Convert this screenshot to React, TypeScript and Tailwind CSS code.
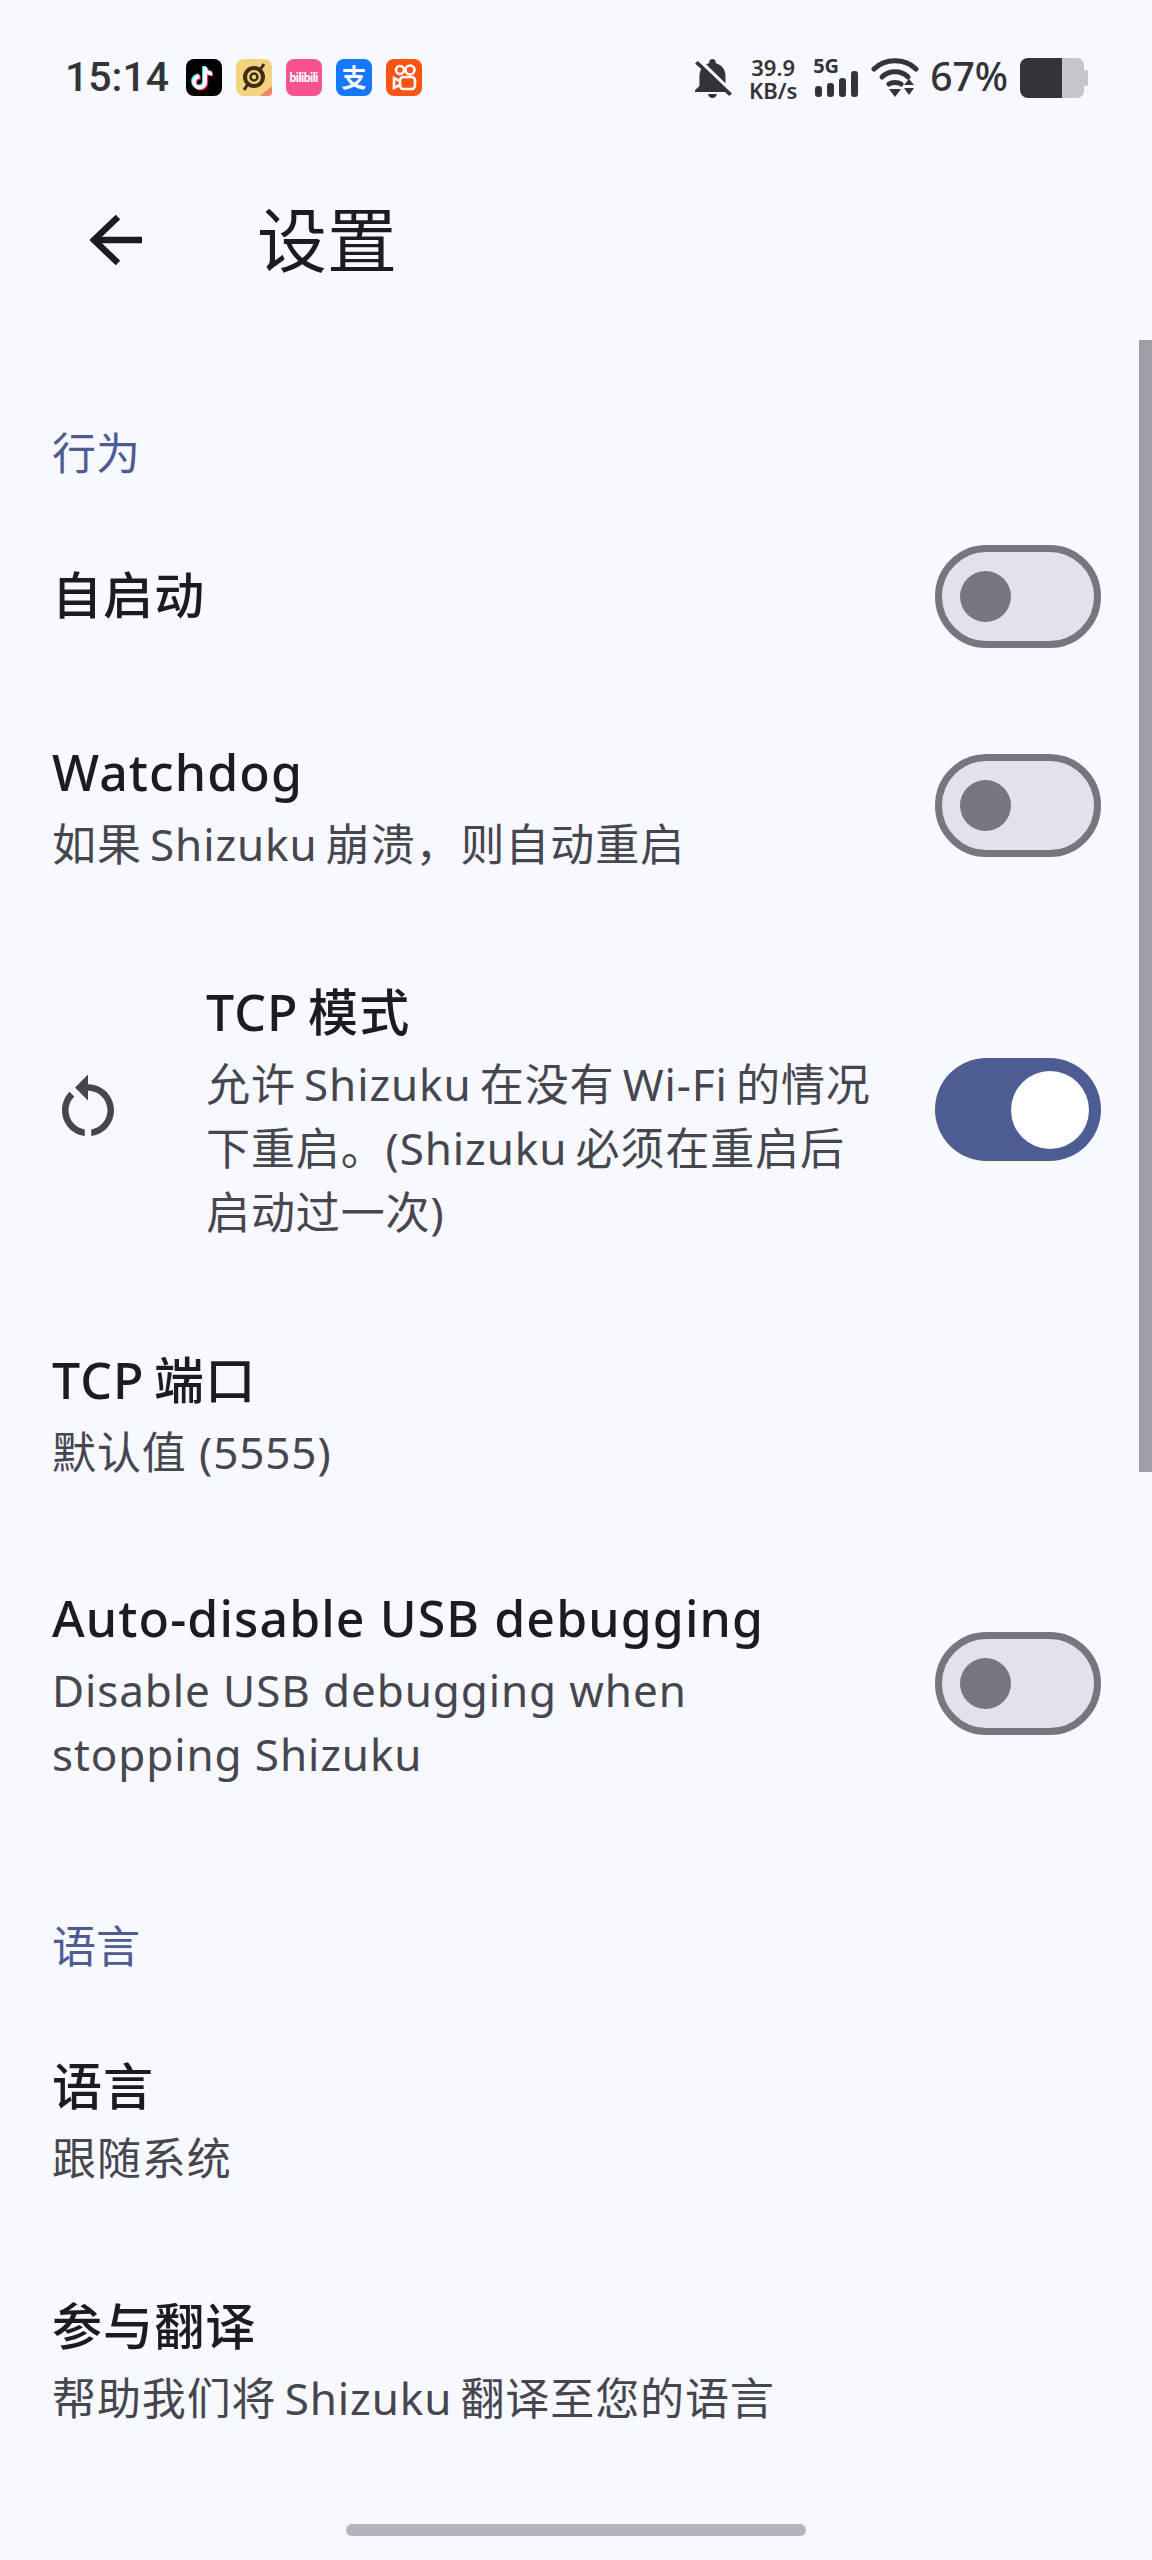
import type { ReactNode } from "react";

const font = "font-['Noto_Sans','Noto_Sans_CJK_SC',sans-serif]";

function Toggle({ on = false, className = "" }: { on?: boolean; className?: string }) {
    if (on) {
        return (
            <div className={`w-[166px] h-[103px] shrink-0 rounded-full bg-[#4d5c92] flex items-center justify-end pr-[12px] ${className}`}>
                <div className="w-[78px] h-[78px] rounded-full bg-white" />
            </div>
        );
    }
    return (
        <div className={`w-[166px] h-[103px] shrink-0 rounded-full bg-[#e2e2ec] border-[7px] border-[#767680] flex items-center pl-[18px] ${className}`}>
            <div className="w-[51px] h-[51px] rounded-full bg-[#767680]" />
        </div>
    );
}

function Row({
    title,
    lines = [],
    toggle,
    icon,
    className = "pt-[50px] pb-[51px]",
}: {
    title: string;
    lines?: string[];
    toggle?: "on" | "off";
    icon?: ReactNode;
    className?: string;
}) {
    return (
        <div className={`flex items-center pl-[52px] pr-[51px] ${className}`}>
            {icon}
            <div className="flex-1 min-w-0 pb-[3px]">
                <div className="text-[50px] leading-[64px] font-medium tracking-[1.1px] text-[#1b1b21] whitespace-nowrap">{title}</div>
                {lines.map((line, i) => (
                    <div
                        key={line}
                        className={`text-[44px] leading-[64px] tracking-[0.9px] text-[#46464f] whitespace-nowrap ${i === 0 ? "mt-[8px]" : ""}`}
                    >
                        {line}
                    </div>
                ))}
            </div>
            {toggle && <Toggle on={toggle === "on"} className={lines.length > 0 ? "mb-[8px]" : ""} />}
        </div>
    );
}

function Section({ label, className }: { label: string; className: string }) {
    return <div className={`pl-[52px] text-[44px] leading-[64px] text-[#4d5c92] ${className}`}>{label}</div>;
}

function AppIcons() {
    return (
        <div className="flex gap-[14px] ml-[18px]">
            <svg width="36" height="37" viewBox="0 0 36 37">
                <rect width="36" height="37" rx="8" fill="#000" />
                <g fill="none" strokeWidth="4">
                    <path d="M19 8v15a5.5 5.5 0 1 1-5.5-5.5M19 8c0 4 3 6.5 7 6.5" stroke="#25f4ee" transform="translate(-1 -1)" />
                    <path d="M19 8v15a5.5 5.5 0 1 1-5.5-5.5M19 8c0 4 3 6.5 7 6.5" stroke="#fe2c55" transform="translate(1.2 1)" />
                    <path d="M19 8v15a5.5 5.5 0 1 1-5.5-5.5M19 8c0 4 3 6.5 7 6.5" stroke="#fff" />
                </g>
            </svg>
            <svg width="36" height="37" viewBox="0 0 36 37">
                <rect width="36" height="37" rx="8" fill="#f5d27f" />
                <circle cx="18" cy="18" r="9" fill="none" stroke="#3d2f16" strokeWidth="4" />
                <circle cx="18" cy="18" r="3.5" fill="none" stroke="#3d2f16" strokeWidth="2.5" />
                <path d="M28 5 24 11M8 31l4-6" stroke="#3d2f16" strokeWidth="3" />
                <path d="M24 37l12-10v6a4 4 0 0 1-4 4z" fill="#f0856b" />
            </svg>
            <svg width="36" height="37" viewBox="0 0 36 37">
                <rect width="36" height="37" rx="8" fill="#f4538e" />
                <text x="18" y="23" textAnchor="middle" fontSize="12" fontWeight="700" fill="#fff" fontFamily="Roboto" textLength="29">
                    bilibili
                </text>
            </svg>
            <div className="w-[36px] h-[37px] rounded-[8px] bg-[#1677ff] flex items-center justify-center text-white text-[25px] leading-none font-bold">
                支
            </div>
            <svg width="36" height="37" viewBox="0 0 36 37">
                <rect width="36" height="37" rx="8" fill="#fb5412" />
                <g fill="none" stroke="#fff" strokeWidth="2.6">
                    <circle cx="14" cy="11" r="4" />
                    <circle cx="24" cy="11" r="4.5" />
                    <rect x="14" y="18" width="15" height="12" rx="3.5" />
                    <path d="M14 22 8 19v10l6-3" />
                </g>
            </svg>
        </div>
    );
}

function StatusBar() {
    return (
        <div className="h-[156px] pt-[58px] pl-[65px] pr-[64px] flex items-start justify-between text-[#333338]">
            <div className="flex items-center h-[38px]">
                <span className="w-[103px] text-[41px] leading-[38px] font-medium font-['Roboto',sans-serif]">15:14</span>
                <AppIcons />
            </div>
            <div className="flex items-start">
                <svg width="38" height="40" viewBox="3.5 2 17.5 20" fill="#333338" preserveAspectRatio="none">
                    <path d="M20 18.69L7.84 6.14 5.27 3.49 4 4.76l2.8 2.8v.01c-.52.99-.8 2.16-.8 3.42v5l-2 2v1h13.73l2 2L21 19.72l-1-1.03zM12 22c1.11 0 2-.89 2-2h-4c0 1.11.89 2 2 2zm6-7.32V11c0-3.08-1.64-5.64-4.5-6.32V4c0-.83-.67-1.5-1.5-1.5s-1.5.67-1.5 1.5v.68c-.15.03-.29.08-.42.12-.1.03-.2.07-.3.11h-.01c-.2.08-.4.17-.59.27-.01 0-.01 0-.02.01L18 14.68z" />
                </svg>
                <div className="ml-[18px] w-[46px] mt-[-2px] flex flex-col items-center font-semibold text-[22px] leading-[23px] whitespace-nowrap">
                    <span>39.9</span>
                    <span>KB/s</span>
                </div>
                <div className="relative ml-[16px] w-[46px] h-[40px]">
                    <span className="absolute left-[1px] top-[-3px] font-bold text-[20px] leading-[22px]">5G</span>
                    <svg width="46" height="40" viewBox="0 0 46 40" fill="#333338">
                        <rect x="3" y="28" width="7" height="11" rx="3" />
                        <rect x="15" y="25" width="7" height="14" rx="3" />
                        <rect x="27" y="20" width="7" height="19" rx="3" />
                        <rect x="39" y="13" width="7" height="26" rx="3" />
                    </svg>
                </div>
                <svg className="ml-[13px]" width="48" height="40" viewBox="0 0 48 40">
                    <g fill="none" stroke="#333338" strokeWidth="5" strokeLinecap="round">
                        <path d="M3 11C14 0 34 0 45 11" />
                        <path d="M11 19C18 12 30 12 37 19" />
                        <path d="M18 26C21 24 27 24 30 26" />
                    </g>
                    <path d="M18 31h12l-6 8zM38 21l5 6H33zM33 30h10l-5 7z" fill="#333338" />
                </svg>
                <span className="ml-[11px] text-[39px] leading-[38px] mt-[-1px] font-medium">67%</span>
                <svg className="ml-[12px]" width="68" height="40" viewBox="0 0 68 40">
                    <path d="M42 0h15a7 7 0 0 1 7 7v5h2a2 2 0 0 1 2 2v12a2 2 0 0 1-2 2h-2v5a7 7 0 0 1-7 7H42z" fill="#c5c5ca" />
                    <path d="M42 0H8a8 8 0 0 0-8 8v24a8 8 0 0 0 8 8h34z" fill="#333338" />
                </svg>
            </div>
        </div>
    );
}

export default function App() {
    return (
        <div className={`relative w-[1152px] h-[2560px] overflow-hidden bg-[#f8f8ff] ${font}`}>
            <StatusBar />

            <div className="h-[168px] flex items-center pl-[90px]">
                <svg width="52" height="52" viewBox="0 0 52 52" fill="none" stroke="#1b1b21" strokeWidth="6.5">
                    <path d="M52 26H4M28 3 4 26l24 23" />
                </svg>
                <div className="ml-[115px] text-[70px] leading-[80px] text-[#1b1b21]">设置</div>
            </div>

            <Section label="行为" className="pt-[97px] mb-[18px]" />
            <Row title="自启动" toggle="off" className="py-[42px]" />
            <Row title="Watchdog" lines={["如果\u2009Shizuku\u2009崩溃，则自动重启"]} toggle="off" />
            <Row
                title={"TCP\u2009模式"}
                lines={["允许\u2009Shizuku\u2009在没有\u2009Wi-Fi\u2009的情况", "下重启。(Shizuku\u2009必须在重启后", "启动过一次)"]}
                toggle="on"
                icon={
                    <svg className="-ml-[3px] mr-[79px] mb-[14px] shrink-0" width="78" height="78" viewBox="0 0 24 24" fill="#46464f">
                        <path d="M12 5V2L8 6l4 4V7c3.31 0 6 2.69 6 6 0 2.97-2.17 5.43-5 5.91v2.02c3.95-.49 7-3.85 7-7.93 0-4.42-3.58-8-8-8zm-6 8c0-1.65.67-3.15 1.76-4.24L6.34 7.34C4.9 8.79 4 10.79 4 13c0 4.08 3.05 7.44 7 7.93v-2.02c-2.83-.48-5-2.94-5-5.91z" />
                    </svg>
                }
            />
            <Row title={"TCP\u2009端口"} lines={["默认值 (5555)"]} className="pt-[50px] pb-[49px]" />
            <Row title="Auto-disable USB debugging" lines={["Disable USB debugging when", "stopping Shizuku"]} toggle="off" />

            <Section label="语言" className="pt-[74px] mb-[26px]" />
            <Row title="语言" lines={["跟随系统"]} />
            <Row title="参与翻译" lines={["帮助我们将\u2009Shizuku\u2009翻译至您的语言"]} />

            {/* overlays */}
            <div className="absolute right-0 top-[340px] w-[13px] h-[1132px] bg-[#9e9ea8]" />
            <div className="absolute left-[346px] top-[2524px] w-[460px] h-[12px] rounded-full bg-[#b4b4bc]" />
        </div>
    );
}
